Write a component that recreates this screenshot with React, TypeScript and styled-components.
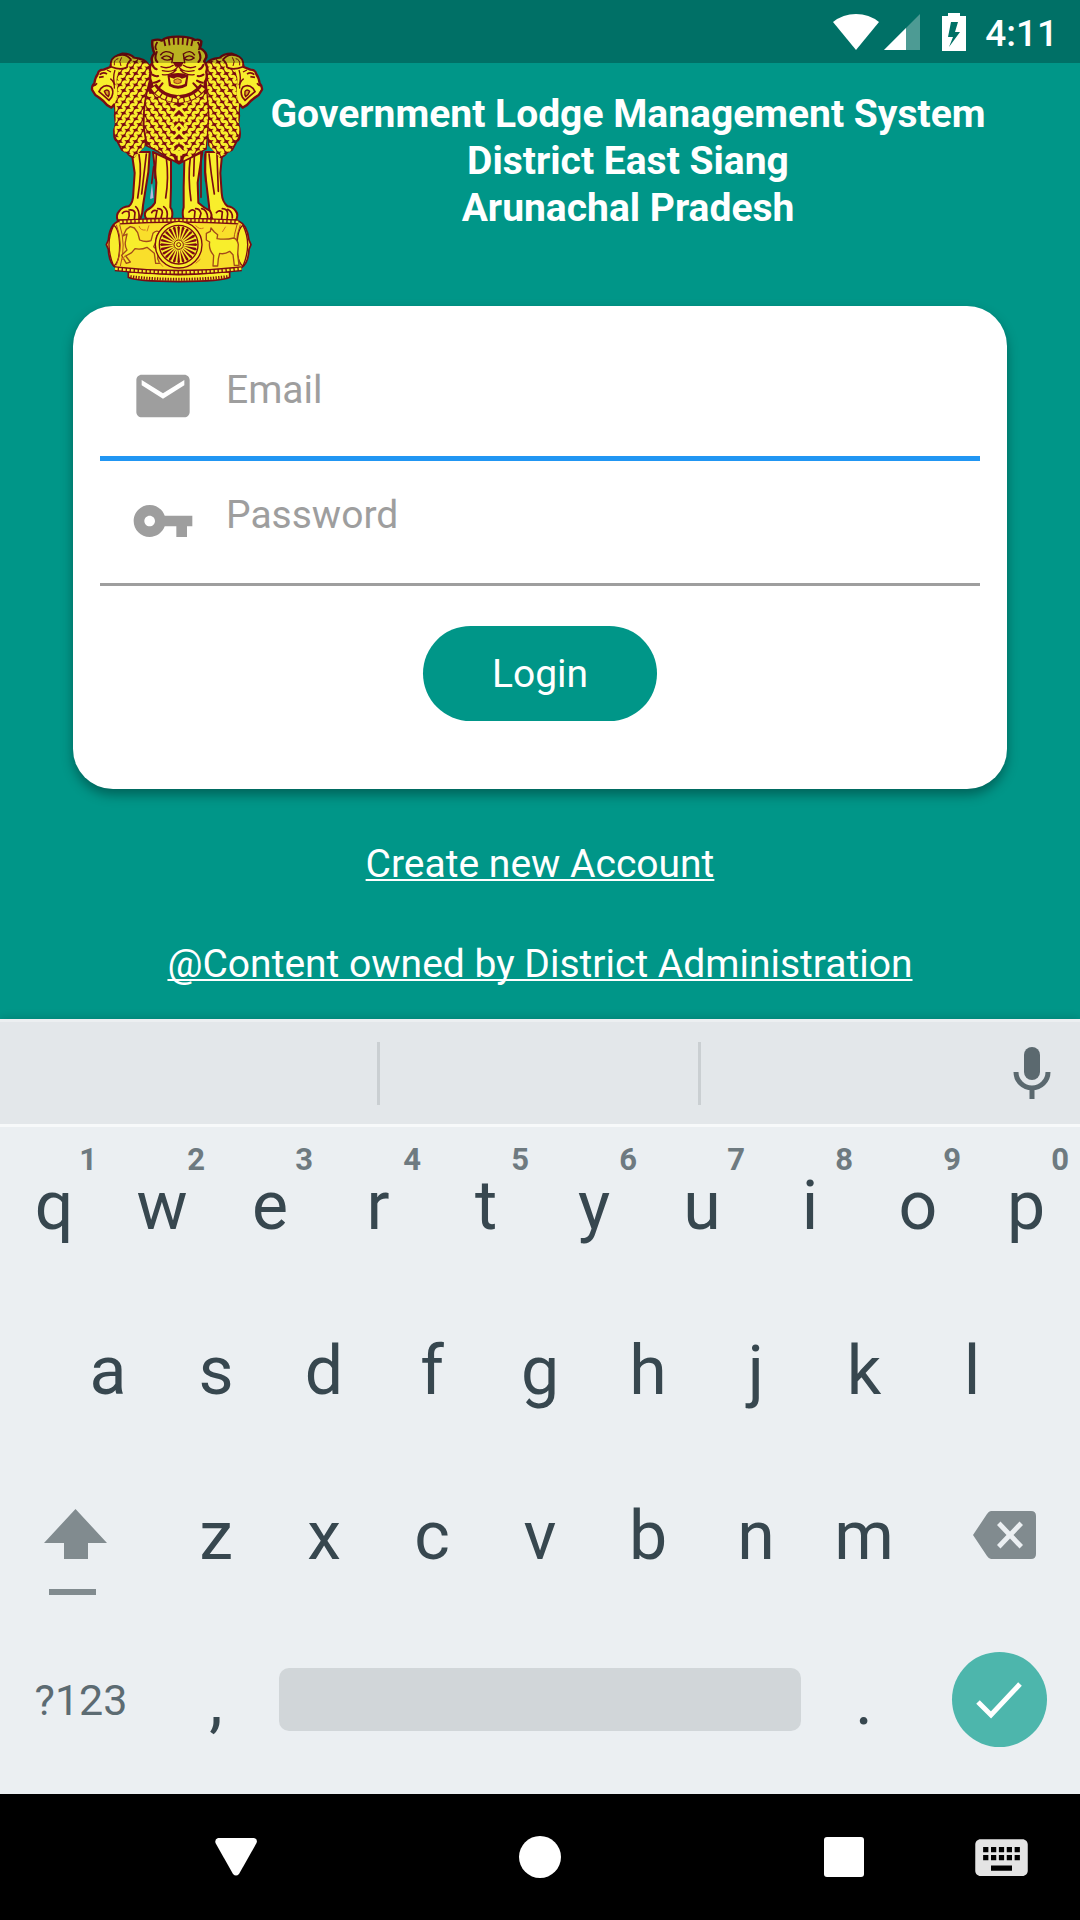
import React from 'react';
import styled, { createGlobalStyle } from 'styled-components';

const GlobalStyle = createGlobalStyle`
  *, *::before, *::after { box-sizing: border-box; }
  body { margin: 0; background: #009688; font-family: Roboto, "Liberation Sans", sans-serif; }
  button, input { font-family: inherit; }
  svg { display: block; flex: none; }
`;

const Screen = styled.div`
  position: relative;
  display: flex;
  flex-direction: column;
  min-height: 100vh;
`;

const StatusBar = styled.div`
  position: absolute;
  top: 0;
  left: 0;
  right: 0;
  height: 63px;
  padding: 0 22px 0 0;
  display: flex;
  align-items: center;
  justify-content: flex-end;
  background: rgba(0, 0, 0, 0.25);
  color: #fff;
`;

const Clock = styled.time`
  margin-left: 19px;
  font-size: 37px;
  font-weight: 500;
  line-height: 44px;
  padding-top: 4px;
`;

const LoginArea = styled.main`
  flex: 1;
  padding: 20px 73px 28px;
  display: flex;
  flex-direction: column;
  background: #009688;
  color: #fff;
`;

const Header = styled.header`
  display: flex;
  justify-content: center;
  align-items: flex-start;
  padding-right: 4px;
  margin-bottom: 6px;
`;

const Title = styled.h1`
  margin: 71px 0 0;
  font-size: 39px;
  line-height: 47px;
  font-weight: 700;
  text-align: center;
`;

const Card = styled.form`
  display: flex;
  flex-direction: column;
  padding: 30px 27px 68px;
  border-radius: 40px;
  background: #fff;
  box-shadow: 0 6px 12px rgba(0, 0, 0, 0.34);
`;

const Field = styled.label<{ $active?: boolean }>`
  display: flex;
  height: 125px;
  color: #9e9e9e;
  border-bottom: ${(p) => (p.$active ? '5px solid #2196f3' : '3px solid #9e9e9e')};
`;

const FieldIcon = styled.span`
  width: 126px;
  padding-top: 28px;
  display: flex;
  justify-content: center;
`;

const FieldInput = styled.input`
  flex: 1;
  min-width: 0;
  height: 60px;
  margin-top: 24px;
  padding: 0;
  border: 0;
  outline: 0;
  background: transparent;
  color: #212121;
  font-size: 39px;
  &::placeholder { color: #9e9e9e; opacity: 1; }
`;

const LoginButton = styled.button`
  align-self: center;
  margin-top: 40px;
  width: 234px;
  height: 95px;
  padding: 0;
  border: 0;
  border-radius: 48px;
  background: #009688;
  color: #fff;
  font-size: 39px;
`;

const Links = styled.nav`
  display: flex;
  flex-direction: column;
  align-items: center;
  gap: 53px;
  margin-top: 52px;
`;

const TextLink = styled.a`
  color: #fff;
  font-size: 39px;
  line-height: 47px;
  text-decoration: underline;
  text-decoration-thickness: 2px;
  text-underline-offset: 2px;
  text-decoration-skip-ink: none;
`;

const Keyboard = styled.section`
  position: relative;
  background: #ebeff2;
  color: #37474f;
  box-shadow: 0 -2px 8px rgba(0, 0, 0, 0.12);
`;

const SuggestionStrip = styled.div`
  display: grid;
  grid-template-columns: 380fr 321fr 379fr;
  align-items: center;
  height: 108px;
  background: #e3e7ea;
  border-top: 3px solid #eceff1;
  border-bottom: 3px solid #f7f9fa;
`;

const Suggestion = styled.div<{ $divided?: boolean }>`
  display: flex;
  justify-content: flex-end;
  height: 63px;
  border-right: ${(p) => (p.$divided ? '3px solid #cacfd2' : '0')};
`;

const Keys = styled.div`
  padding-bottom: 7px;
`;

const KeyRow = styled.div<{ $columns: string; $inset?: boolean }>`
  display: grid;
  grid-template-columns: ${(p) => p.$columns};
  height: 165px;
  padding: 0 ${(p) => (p.$inset ? '5%' : '0')};
`;

const Key = styled.button`
  position: relative;
  display: flex;
  align-items: center;
  justify-content: center;
  min-width: 0;
  padding: 0 0 8px;
  border: 0;
  background: transparent;
  color: #37474f;
  font-size: 68px;
`;

const FunctionKey = styled(Key)`
  padding-bottom: 10px;
  color: #5c6b72;
  font-size: 43px;
`;

const IconKey = styled(FunctionKey)<{ $end?: boolean }>`
  color: #818b8f;
  justify-content: ${(p) => (p.$end ? 'flex-end' : 'flex-start')};
  padding: 0 44px 10px;
`;

const KeyHint = styled.span`
  position: absolute;
  top: 17px;
  right: 11px;
  color: #6e7a80;
  font-size: 31px;
  line-height: 32px;
  font-weight: 700;
`;

const SpaceBar = styled.span`
  flex: 1;
  height: 63px;
  margin: 0 9px;
  border-radius: 10px;
  background: #d1d6d9;
`;

const EnterDisc = styled.span`
  display: flex;
  align-items: center;
  justify-content: center;
  width: 95px;
  height: 95px;
  border-radius: 50%;
  background: #4db6ac;
`;

const MicButton = styled.button`
  display: flex;
  align-items: center;
  justify-content: center;
  width: 96px;
  padding: 0;
  border: 0;
  background: transparent;
`;

const SystemNav = styled.nav`
  display: grid;
  grid-template-columns: 84fr 304fr 304fr 304fr 84fr;
  height: 126px;
  background: #000;
`;

const NavButton = styled.button<{ $column: number }>`
  grid-row: 1;
  grid-column: ${(p) => p.$column};
  display: flex;
  align-items: center;
  justify-content: center;
  padding: 0;
  border: 0;
  background: transparent;
`;

const ImeButton = styled(NavButton)`
  grid-column: 4 / 6;
  justify-content: flex-end;
  justify-self: end;
  width: 120px;
  padding: 0 47px 0 0;
`;

const INK = '#7c0b12';
const GOLD = '#f8ee2c';

function curls(x0: number, x1: number, y0: number, y1: number, dir: number) {
  const out: string[] = [];
  let row = 0;
  for (let y = y0; y < y1; y += 17) {
    for (let x = x0 + (row % 2) * 12; x < x1; x += 24) {
      out.push(`M${x - 8 * dir} ${y + 7}q${1 * dir} -9 ${8 * dir} -7t${8 * dir} -7`);
    }
    row += 1;
  }
  return out.join('');
}

const SIDE_MANE = curls(92, 230, 118, 430, 1);
const CHEST = curls(190, 288, 226, 430, -1) + curls(314, 406, 226, 430, 1);

const SideLion = () => (
  <g>
    <path
      d="M130 101q26 0 36 13q32 2 44 22l3 80l-16 160q-8 10-18 14l-16 21q-12-2-18-14l-16-8l-14-26q-8-3-9-16q-2-18 5-34l-3-26q3-20-2-34l-9 10q-14-6-24-20q-14-12-24-18l-10-16q-1-12 7-19q3-18 10-27q2-14 18-14l20-8q4-32 36-40z"
      fill={GOLD} stroke={INK} strokeWidth="7" strokeLinejoin="round"
    />
    <g clipPath="url(#side-mane)">
      <path d="M80 90H230V430H80z" fill={INK} />
      <path d={SIDE_MANE} fill="none" stroke={GOLD} strokeWidth="9" strokeLinecap="round" />
    </g>
    <path d="M96 140q-4-28 22-34t38 14q-12 8-12 22q-18 10-48-2z" fill={GOLD} stroke={INK} strokeWidth="5" />
    <path d="M106 136q-2-18 12-20M128 112q-10 12-2 26" fill="none" stroke={INK} strokeWidth="3" />
    <path d="M62 164q10-10 22-2M60 172l14-2M54 190q-4 6-12 8M66 205q14-14 30-4q10 12 2 30l-8 10q-18-16-30-26l6-10z" fill="none" stroke={INK} strokeWidth="5" />
    <path d="M76 214q8-8 14 0q2 10-2 16q-8-4-12-16z" fill="#d8a321" stroke={INK} strokeWidth="4" />
    <path d="M108 150q-8 24 0 46M94 176q14 10 12 30M84 150l12 6" fill="none" stroke={INK} strokeWidth="4" />
  </g>
);

const spokes = Array.from({ length: 24 }, (_, i) => i * 15);

const Emblem = () => (
  <svg width="180" height="280" viewBox="33 0 540 840" role="img" aria-label="State emblem">
    <defs>
      <clipPath id="side-mane">
        <path d="M150 114q48 4 62 24l2 80l-18 162l-30 32l-32-18l-26-48q-4-24 2-46l-2-50q12-28 4-60q-2-40 38-76z" />
      </clipPath>
      <clipPath id="chest">
        <path d="M212 196q84 60 168 0l8 90l-8 100q-22 8-40 22l-40 20l-42-22q-18-14-52-30l-10-60q0-70 16-120z" />
      </clipPath>
    </defs>

    {/* legs and paws */}
    <g fill={GOLD} stroke={INK} strokeWidth="6" strokeLinejoin="round">
      <path d="M158 396l54 0l-4 60l-16 100q0 24-10 45H116q-6-16 5-28q8-12 28-14q14-10 14-40l4-60z" />
      <path d="M430 396l-50 0l-2 60l12 100q0 24 12 45h68q10-16 0-28q-8-12-24-14q-16-12-18-40l-4-60z" />
      <path d="M222 396l54 26l0 80l-2 60q10 12 4 34h-76q-10-14 2-26q16-8 24-22l4-60z" />
      <path d="M370 396l-54 26l-2 80l0 60q-6 18 0 36h80q8-14-2-26q-16-8-34-24l-2-60z" />
    </g>
    <g fill="none" stroke={INK} strokeWidth="5" strokeLinecap="round">
      <path d="M180 404q10 50-4 130M202 402l-14 120M232 404l-4 70M262 414q8 60-2 120M224 440l-6 50M334 412q-8 60 2 130M346 408l-2 60M366 402v130M390 402q6 60 16 120M414 404l4 110M378 404l2 80" />
      <path d="M130 580q8-10 20-4q2 12-2 20M150 570q14-2 18 8l-2 20M170 560q12 10 10 36M218 578q4-10 16-6l-4 20M236 566q14 0 14 12l-4 16M254 560q14 10 10 32M330 576q10-12 18-2l-2 20M350 566q12 0 16 14l-4 14M368 566q16 2 18 28M412 578q8-10 18-2l-2 20M430 566q16 0 16 16l-2 16M446 568q16 8 14 26" />
    </g>
    <path d="M219 488l4 44q-4 6-10 4z" fill="#b9b6da" />

    <SideLion />
    <g transform="translate(588 0) scale(-1 1)">
      <SideLion />
    </g>

    {/* chest */}
    <path d="M212 186q84 70 168 0l8 100l-8 100q-22 8-40 22l-40 22l-44-24q-18-14-52-30l-10-60q0-70 18-130z" fill={INK} stroke={INK} strokeWidth="7" />
    <g clipPath="url(#chest)">
      <path d={CHEST} fill="none" stroke={GOLD} strokeWidth="9" strokeLinecap="round" />
      <path d="M284 280l16-16l16 16M284 304l16-16l16 16M284 328l16-16l16 16M284 352l16-16l16 16M284 376l16-16l16 16M288 398l12-14l12 14M300 396v22" fill="none" stroke={GOLD} strokeWidth="8" strokeLinecap="round" strokeLinejoin="round" />
    </g>

    {/* central head */}
    <g transform="translate(-24 0) scale(1.08 1)">
      <path d="M226 62q16-6 26 0q10-12 46-12q34 0 46 10q12-4 18 4q0 12-4 20q20 12 18 28l-6 12q12 16 6 32q4 18-4 30q2 20-14 28q-20 26-60 28q-46-4-60-28q-14-10-14-26q-8-16-2-30q-8-16 4-30q-6-14 6-28q-8-18-6-38z" fill={GOLD} stroke={INK} strokeWidth="7" strokeLinejoin="round" />
      <path d="M262 78l-4-20M274 76l-3-22M286 74l-1-22M298 74V52M310 74l1-22M322 76l3-22M334 78l4-20M240 66q-10 16-2 24M352 66q10 16 2 24" fill="none" stroke={INK} strokeWidth="5" />
      <path d="M238 96q-8 20 2 30M226 134q4 12 12 14M226 164q8 6 16 4M230 188q8 0 16-6M356 96q8 20-2 30M368 134q-4 12-12 14M368 164q-8 6-16 4M366 188q-8 0-16-6M244 204l10-14M352 204l-12-14" fill="none" stroke={INK} strokeWidth="6" strokeLinecap="round" />
      <path d="M248 106q12-20 36-4M344 106q-12-20-32-4M252 114q14-14 28 2q-14 10-28-2zM342 114q-14-14-28 2q14 10 28-2zM284 100l-4 30M312 100l4 30" fill="none" stroke={INK} strokeWidth="4" />
      <path d="M282 126h32l-8 14h-16z" fill={INK} />
      <path d="M298 138q-12 22-44 14M298 138q12 22 44 14M250 140q18 8 34-4M254 164q22 4 38-14M346 140q-18 8-34-4M342 164q-22 4-38-14" fill="none" stroke={INK} strokeWidth="4" strokeLinecap="round" />
      <path d="M268 166q30-14 58 0l-4 32q-24 16-50 0z" fill={INK} />
      <path d="M274 172l12 4q10-8 22 0l12-4l-4 20q-18 10-38 0z" fill={GOLD} />
      <path d="M286 180q10-8 20 0v8q-10 6-20 0z" fill="#e49a2a" stroke={INK} strokeWidth="2" />
    </g>
    <path d="M222 198q24 36 76 40q52-4 76-40" fill="none" stroke={INK} strokeWidth="24" />
    <path d="M222 202q24 36 76 40q52-4 76-40" fill="none" stroke={GOLD} strokeWidth="12" strokeDasharray="14 4" />
    <circle cx="298" cy="232" r="6" fill={GOLD} stroke={INK} strokeWidth="3" />

    {/* abacus */}
    <path d="M148 756h304v16q-20 12-152 13q-132-1-152-13z" fill={GOLD} stroke={INK} strokeWidth="5" />
    <path d="M154 770q144 16 292 0" fill="none" stroke={INK} strokeWidth="9" strokeDasharray="4 4" />
    <path d="M118 604q180-12 362 0q24 10 30 56l6 14l-6 14q-2 44-24 56q-90 20-188 20q-106-2-186-20q-22-12-24-56l-6-14l6-14q4-46 30-56z" fill="#f9df2b" stroke={INK} strokeWidth="5" strokeLinejoin="round" />
    <path d="M122 606q178-10 356 0M108 746q190 22 380 0" fill="none" stroke={INK} strokeWidth="15" />
    <path d="M122 606q178-10 356 0M108 746q190 22 380 0" fill="none" stroke={GOLD} strokeWidth="7" strokeDasharray="8 4" />
    <g fill={GOLD} stroke={INK} strokeWidth="4">
      <path d="M104 616q-28 56 0 122q18-10 18-62q-2-52-18-60zM492 616q28 56 0 122q-18-10-18-62q2-52 18-60z" />
      <path d="M112 614q24 60 0 122M484 614q-24 60 0 122M122 614q20 60 2 124M474 614q-20 60-2 124" fill="none" stroke="#b0501b" strokeWidth="3" />
    </g>
    <g fill={GOLD} stroke="#a34a1a" strokeWidth="4" strokeLinejoin="round">
      <path d="M142 628l12-8l12 4l10 14l6 22q18 8 34 2l6-22q12-12 20-2q-12 8-10 24l-8 18l14 14l-2 22l6 14h-12l-4-30l-22-18q-18 8-36 4l-10 12l-18 10l14 18l-12 4l-14-24l16-16q-8-14-4-28l4-20l-12 6z" />
      <path d="M382 640l12-6l2-10l10 12l10 8l-2 12q26 4 50-2q12 4 14 20l-2 30l4 32h-14l-4-32l-10-10q-16 10-30 6l-4 16l-2 22h-14l2-32q-16-18-12-40l-10-6z" />
    </g>
    <path d="M180 618q4 14 20 12M210 616l-6 18M350 616q10 14 24 8M440 620l-10 16M130 720l10-16M240 726l12 14M350 730l14-12" stroke="#d17a20" strokeWidth="3" fill="none" />

    {/* wheel */}
    <circle cx="299" cy="674" r="70" fill={GOLD} stroke={INK} strokeWidth="4" />
    <circle cx="299" cy="674" r="58" fill={GOLD} stroke={INK} strokeWidth="4" />
    {spokes.map((a) => (
      <path key={a} d="M299 660l-4-38l4-5l4 5z" fill={INK} transform={`rotate(${a} 299 674)`} />
    ))}
    <circle cx="299" cy="674" r="14" fill={GOLD} stroke={INK} strokeWidth="3" />
    <circle cx="299" cy="674" r="6" fill={GOLD} stroke={INK} strokeWidth="3" />
  </svg>
);

const MailIcon = () => (
  <svg width="64" height="64" viewBox="0 0 24 24" fill="currentColor" aria-hidden="true">
    <path d="M20 4H4c-1.1 0-1.99.9-1.99 2L2 18c0 1.1.9 2 2 2h16c1.1 0 2-.9 2-2V6c0-1.1-.9-2-2-2zm0 4l-8 5-8-5V6l8 5 8-5v2z" />
  </svg>
);

const PasswordIcon = () => (
  <svg width="64" height="64" viewBox="0 0 24 24" fill="currentColor" aria-hidden="true">
    <path d="M12.65 10C11.83 7.67 9.61 6 7 6c-3.31 0-6 2.69-6 6s2.69 6 6 6c2.61 0 4.83-1.67 5.65-4H17v4h4v-4h2v-4H12.65zM7 14c-1.1 0-2-.9-2-2s.9-2 2-2 2 .9 2 2-.9 2-2 2z" />
  </svg>
);

const StatusIcons = () => (
  <svg width="134" height="40" viewBox="833 11 134 40" fill="#fff" aria-hidden="true">
    <path d="M857 49L834 21q10-8 23-8t23 8z" />
    <path d="M921 13v36h-36z" opacity=".3" />
    <path d="M907 27v22h-22z" />
    <path d="M949 12h12v3h6v35h-24V15h6zM952 21l-3 15h5l-4 10l11-15h-5l3-10z" fillRule="evenodd" />
  </svg>
);

const MicIcon = () => (
  <svg width="38" height="52" viewBox="0 0 38 52" aria-hidden="true">
    <rect x="11" y="0" width="16" height="33" rx="8" fill="#5b696f" />
    <path d="M3 25a16 16 0 0 0 32 0M19 41v11" fill="none" stroke="#5b696f" strokeWidth="5" />
  </svg>
);

const ShiftIcon = () => (
  <svg width="64" height="120" viewBox="0 0 64 120" fill="currentColor" aria-hidden="true">
    <path d="M31.500 34L63 68H44V84H20V68H0zM5 114h47v6H5z" />
  </svg>
);

const BackspaceIcon = () => (
  <svg width="63" height="48" viewBox="0 0 63 48" fill="currentColor" aria-hidden="true">
    <path d="M18 0H58q5 0 5 5V43q0 5-5 5H18q-2 0-4-3L0 24L14 3q2-3 4-3zM24 14l9.500 10L24 34l3.500 3.500L37 27.500l9.500 10L50 34l-9.500-10L50 14l-3.500-3.500L37 20.500l-9.500-10z" fillRule="evenodd" />
  </svg>
);

const CheckIcon = () => (
  <svg width="46" height="38" viewBox="0 0 46 38" fill="none" stroke="#fff" strokeWidth="5" aria-hidden="true">
    <path d="M2 21L15 34L44 3" />
  </svg>
);

const KeyboardIcon = () => (
  <svg width="63" height="63" viewBox="0 0 24 24" fill="#e4e4e4" aria-hidden="true">
    <path d="M20 5H4c-1.1 0-1.99.9-1.99 2L2 17c0 1.1.9 2 2 2h16c1.1 0 2-.9 2-2V7c0-1.1-.9-2-2-2zm-9 3h2v2h-2V8zm0 3h2v2h-2v-2zM8 8h2v2H8V8zm0 3h2v2H8v-2zm-1 2H5v-2h2v2zm0-3H5V8h2v2zm9 7H8v-2h8v2zm0-4h-2v-2h2v2zm0-3h-2V8h2v2zm3 3h-2v-2h2v2zm0-3h-2V8h2v2z" />
  </svg>
);

const letters = (row: string) => row.split('').map((l) => <Key key={l} type="button">{l}</Key>);

export default function App() {
  return (
    <Screen>
      <GlobalStyle />
      <LoginArea>
        <Header>
          <Emblem />
          <Title>
            Government Lodge Management System
            <br />
            District East Siang
            <br />
            Arunachal Pradesh
          </Title>
        </Header>
        <Card onSubmit={(e: React.FormEvent) => e.preventDefault()}>
          <Field $active htmlFor="email">
            <FieldIcon><MailIcon /></FieldIcon>
            <FieldInput id="email" type="email" placeholder="Email" aria-label="Email" />
          </Field>
          <Field htmlFor="password">
            <FieldIcon><PasswordIcon /></FieldIcon>
            <FieldInput id="password" type="password" placeholder="Password" aria-label="Password" />
          </Field>
          <LoginButton type="submit">Login</LoginButton>
        </Card>
        <Links>
          <TextLink href="#register">Create new Account</TextLink>
          <TextLink href="#owner">@Content owned by District Administration</TextLink>
        </Links>
      </LoginArea>

      <Keyboard aria-label="Keyboard">
        <SuggestionStrip>
          <Suggestion $divided />
          <Suggestion $divided />
          <Suggestion>
            <MicButton type="button" aria-label="Voice input"><MicIcon /></MicButton>
          </Suggestion>
        </SuggestionStrip>
        <Keys>
          <KeyRow $columns="repeat(10, 1fr)">
            {'qwertyuiop'.split('').map((l, i) => (
              <Key key={l} type="button">
                {l}
                <KeyHint>{(i + 1) % 10}</KeyHint>
              </Key>
            ))}
          </KeyRow>
          <KeyRow $columns="repeat(9, 1fr)" $inset>{letters('asdfghjkl')}</KeyRow>
          <KeyRow $columns="3fr repeat(7, 2fr) 3fr">
            <IconKey type="button" aria-label="Shift"><ShiftIcon /></IconKey>
            {letters('zxcvbnm')}
            <IconKey type="button" $end aria-label="Backspace"><BackspaceIcon /></IconKey>
          </KeyRow>
          <KeyRow $columns="3fr 2fr 10fr 2fr 3fr">
            <FunctionKey type="button">?123</FunctionKey>
            <Key type="button">,</Key>
            <FunctionKey type="button" aria-label="Space"><SpaceBar /></FunctionKey>
            <Key type="button">.</Key>
            <FunctionKey type="button" aria-label="Done"><EnterDisc><CheckIcon /></EnterDisc></FunctionKey>
          </KeyRow>
        </Keys>
      </Keyboard>

      <SystemNav aria-label="System">
        <NavButton type="button" $column={2} aria-label="Back">
          <svg width="42" height="38" viewBox="0 0 42 38" fill="#fff" aria-hidden="true">
            <path d="M3 0H39q4 1 2.500 5L24 36q-3 3-6 0L0.500 5q-1-4 2.500-5z" />
          </svg>
        </NavButton>
        <NavButton type="button" $column={3} aria-label="Home">
          <svg width="42" height="42" viewBox="0 0 42 42" fill="#fff" aria-hidden="true">
            <circle cx="21" cy="21" r="21" />
          </svg>
        </NavButton>
        <NavButton type="button" $column={4} aria-label="Recent apps">
          <svg width="40" height="40" viewBox="0 0 40 40" fill="#fff" aria-hidden="true">
            <rect width="40" height="40" rx="3" />
          </svg>
        </NavButton>
        <ImeButton type="button" $column={4} aria-label="Switch keyboard"><KeyboardIcon /></ImeButton>
      </SystemNav>

      <StatusBar>
        <StatusIcons />
        <Clock>4:11</Clock>
      </StatusBar>
    </Screen>
  );
}
